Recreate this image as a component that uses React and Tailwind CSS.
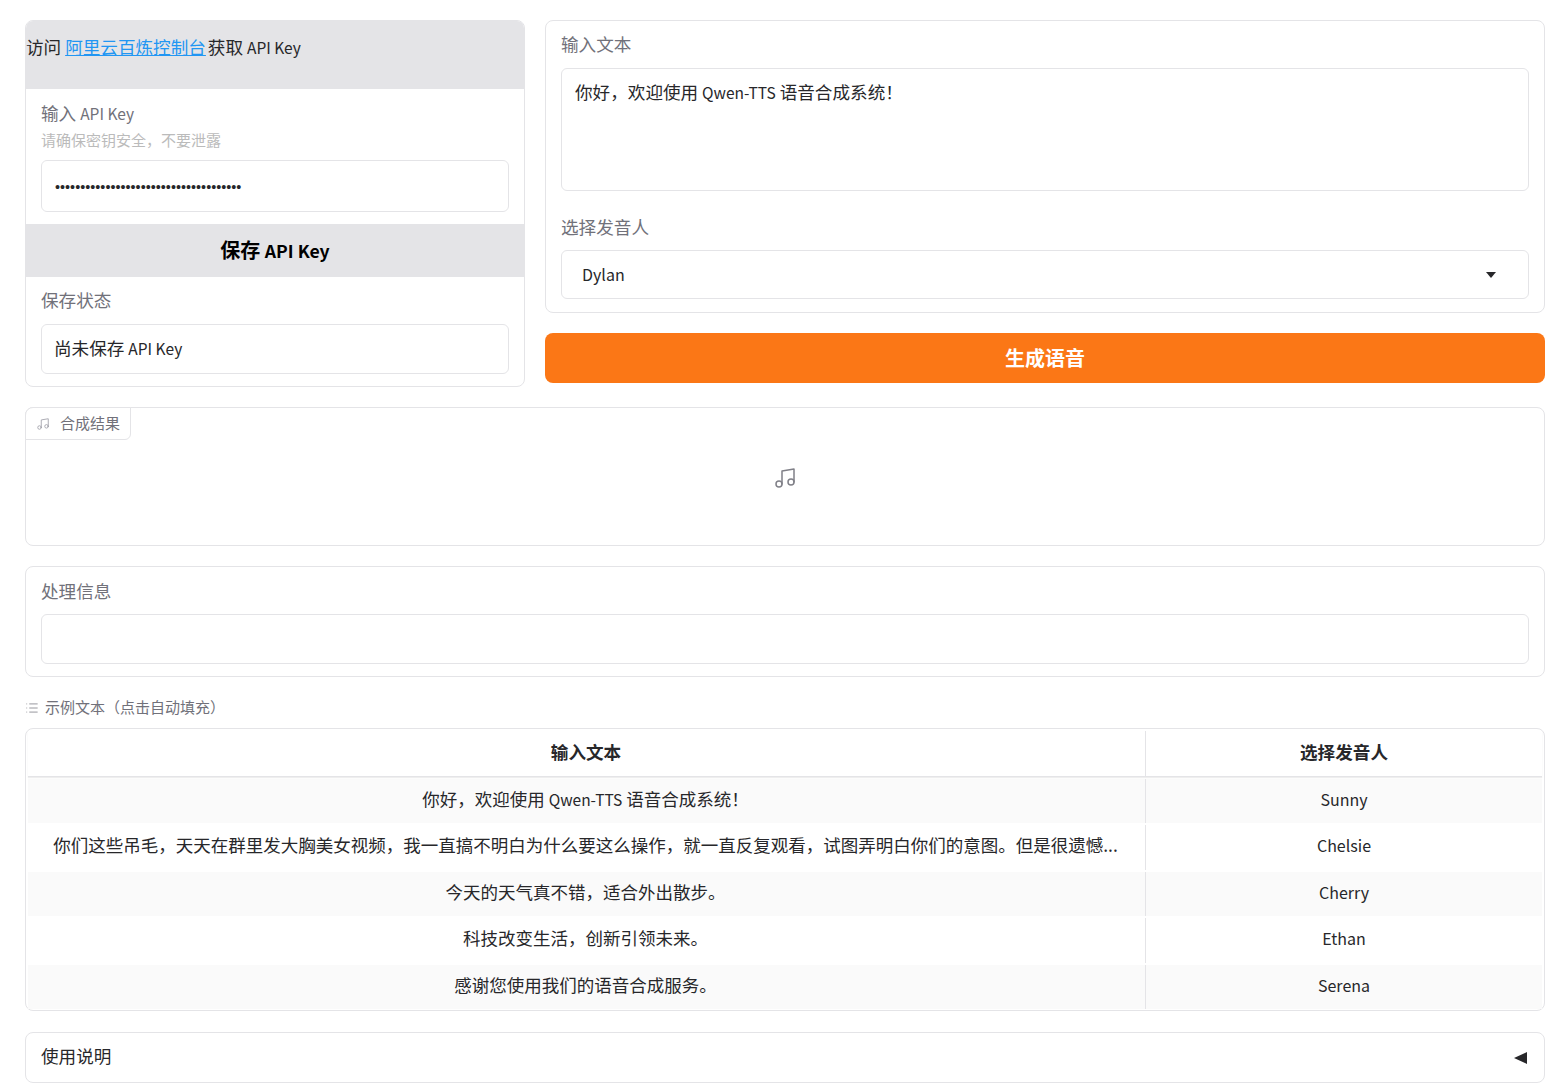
import { List, Music } from "lucide-react";

function En({ children }) {
  return <span className="text-[15.5px]">{children}</span>;
}

const rows = [
  {
    text: (
      <>
        你好，欢迎使用 <En>Qwen-TTS</En> 语音合成系统！
      </>
    ),
    voice: "Sunny",
    cls: "h-[44px] bg-[#fafafa]",
    voiceCls: "pb-[4px]",
  },
  {
    text: "你们这些吊毛，天天在群里发大胸美女视频，我一直搞不明白为什么要这么操作，就一直反复观看，试图弄明白你们的意图。但是很遗憾...",
    voice: "Chelsie",
    cls: "h-[49px] py-[2px] bg-white",
    voiceCls: "pb-[6px]",
  },
  { text: "今天的天气真不错，适合外出散步。", voice: "Cherry", cls: "h-[44px] bg-[#fafafa]", voiceCls: "pb-[4px]" },
  { text: "科技改变生活，创新引领未来。", voice: "Ethan", cls: "h-[49px] py-[2px] bg-white", voiceCls: "pb-[6px]" },
  { text: "感谢您使用我们的语音合成服务。", voice: "Serena", cls: "h-[44px] bg-[#fafafa]", voiceCls: "pb-[4px]" },
];

function Label({ children }) {
  return <div className="text-[17.6px] leading-[24px] text-[#71717a]">{children}</div>;
}

function Box({ className = "", children }) {
  return (
    <div className={`flex items-center rounded-[6px] border border-[#e4e4e7] bg-white px-[13px] text-[#27272a] ${className}`}>
      {children}
    </div>
  );
}

export default function App() {
  return (
    <div
      className="bg-white pl-[25px] pr-[23px] pt-[20px] text-[16px] text-[#27272a]"
      style={{ fontFamily: '"Noto Sans CJK SC", "Noto Sans", sans-serif' }}
    >
      <div className="flex gap-[20px]">
        <div className="w-[500px] h-[367px] overflow-hidden rounded-[8px] border border-[#e4e4e7]">
          <div className="h-[68px] bg-[#e4e4e7] pt-[14px] text-[17.6px] leading-[24px]">
            访问 <a className="mr-[-2px] text-[#2196f3] underline">阿里云百炼控制台</a> 获取 <En>API Key</En>
          </div>
          <div className="px-[15px] pt-[12px]">
            <Label>
              输入 <En>API Key</En>
            </Label>
            <div className="mt-[5px] text-[15px] leading-[20px] text-[#bbbbbb]">请确保密钥安全，不要泄露</div>
            <Box className="mt-[10px] h-[52px]">
              <input
                type="password"
                readOnly
                defaultValue="sk-0000000000000000000000000000000000"
                className="w-full bg-transparent pt-[4px] font-['Liberation_Sans'] text-[14.4px] outline-none"
              />
            </Box>
          </div>
          <div className="mt-[12px] flex h-[53px] items-center justify-center bg-[#e4e4e7] pb-[2px] text-[20px] font-bold text-black">
            <span>
              保存 <span className="text-[17.6px]">API Key</span>
            </span>
          </div>
          <div className="px-[15px] pt-[11px]">
            <Label>保存状态</Label>
            <Box className="mt-[12px] h-[50px] pb-[2px] text-[17.6px]">
              <span className="-ml-[1px]">
                尚未保存 <En>API Key</En>
              </span>
            </Box>
          </div>
        </div>

        <div className="flex-1">
          <div className="h-[293px] rounded-[8px] border border-[#e4e4e7] px-[15px] pt-[11px]">
            <Label>输入文本</Label>
            <div className="mt-[12px] h-[123px] rounded-[6px] border border-[#e4e4e7] px-[13px] py-[10px] text-[17.6px] leading-[26px] text-[#27272a]">
              你好，欢迎使用 <En>Qwen-TTS</En> 语音合成系统！
            </div>
            <div className="mt-[24px]">
              <Label>选择发音人</Label>
            </div>
            <div className="mt-[11px] flex h-[49px] items-center justify-between rounded-[6px] border border-[#e4e4e7] pl-[20px] pr-[32px] text-[16px]">
              <span className="pb-[1px]">Dylan</span>
              <span className="h-0 w-0 border-x-[5.5px] border-t-[6px] border-x-transparent border-t-[#27272a]" />
            </div>
          </div>
          <button className="mt-[20px] block h-[50px] w-full rounded-[8px] bg-[#fb7716] text-[20px] font-bold text-white">
            生成语音
          </button>
        </div>
      </div>

      <div className="relative mt-[20px] flex h-[139px] items-start justify-center rounded-[8px] border border-[#e4e4e7] pt-[58px]">
        <div className="absolute left-[-1px] top-[-1px] flex h-[33px] w-[106px] items-center rounded-br-[6px] rounded-tl-[8px] border border-[#e4e4e7] bg-white pl-[10px] text-[15px] text-[#71717a]">
          <Music size={14} strokeWidth={1.5} className="text-[#a1a1aa]" />
          <span className="ml-[10px]">合成结果</span>
        </div>
        <Music size={24} strokeWidth={1.5} className="text-[#808088]" />
      </div>

      <div className="mt-[20px] h-[111px] rounded-[8px] border border-[#e4e4e7] px-[15px] pt-[12px]">
        <Label>处理信息</Label>
        <Box className="mt-[11px] h-[50px]" />
      </div>

      <div className="mt-[20px] flex h-[21px] items-center text-[15px] text-[#71717a]">
        <List size={14} strokeWidth={1.25} className="text-[#71717a]" />
        <span className="ml-[6px]">示例文本（点击自动填充）</span>
      </div>

      <div className="mt-[10px] h-[283px] rounded-[8px] border border-[#e4e4e7] px-[2px] pt-[2px] text-[17.5px]">
        <div className="grid h-[46px] grid-cols-[1118px_1fr] items-stretch border-b border-[#e4e4e7] text-[17.6px] font-bold shadow-[0_1px_1px_#eeeeee]">
          <div className="flex items-center justify-center border-r border-[#e4e4e7] pb-[2px] pr-[1px]">输入文本</div>
          <div className="flex items-center justify-center pb-[2px]">选择发音人</div>
        </div>
        <div className="mt-[2px]">
          {rows.map((row) => (
            <div key={row.voice} className={`grid grid-cols-[1118px_1fr] ${row.cls}`}>
              <div className="flex items-center justify-center whitespace-nowrap border-r border-[#e4e4e7] pb-[4px] pr-[2px]">
                <span>{row.text}</span>
              </div>
              <div className={`flex items-center justify-center text-[16px] ${row.voiceCls}`}>{row.voice}</div>
            </div>
          ))}
        </div>
      </div>

      <div className="mt-[21px] flex h-[51px] items-center justify-between rounded-[8px] border border-[#e4e4e7] pl-[15px] pr-[17px] text-[17.6px]">
        <span className="pb-[2px]">使用说明</span>
        <span className="h-0 w-0 border-y-[6px] border-r-[13px] border-y-transparent border-r-[#27272a]" />
      </div>
    </div>
  );
}
